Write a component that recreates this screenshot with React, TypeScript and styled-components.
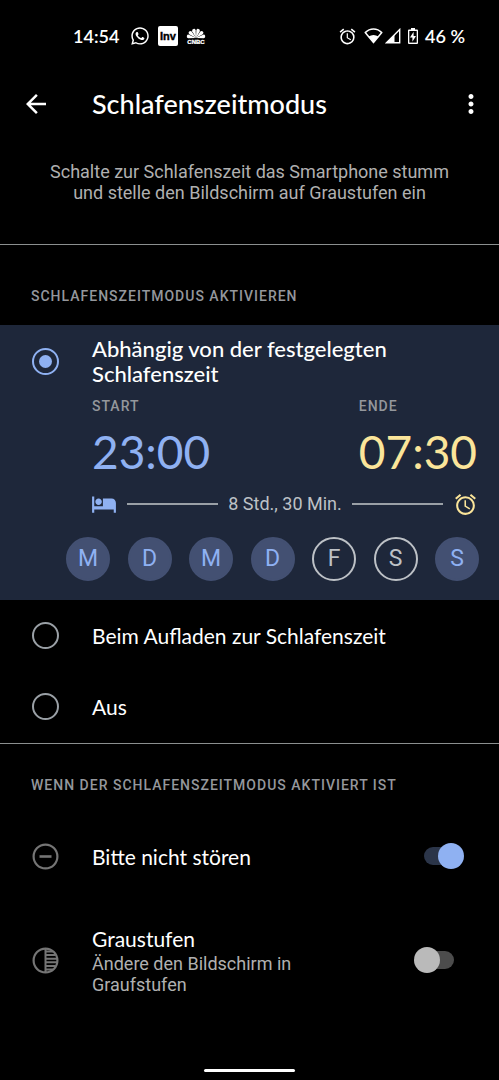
import React, { useState } from "react";
import styled, { createGlobalStyle } from "styled-components";
import { FaWhatsapp } from "react-icons/fa6";
import { MdAlarm, MdArrowBack, MdHotel, MdMoreVert } from "react-icons/md";

const color = {
  background: "#000",
  panel: "#1e273a",
  white: "#fff",
  muted: "#b0b0b0",
  label: "#94979c",
  blue: "#8fb1f2",
  yellow: "#fbe59a",
  chip: "#435072",
  grey: "#bdc1c6",
  ring: "#9aa0a6",
  icon: "#757575",
  divider: "#8b8f8f",
};

const display = `Lato, "Open Sans", sans-serif`;
const body = `Roboto, "Liberation Sans", sans-serif`;

const GlobalStyle = createGlobalStyle`
  *, *::before, *::after { box-sizing: border-box; }
  body { margin: 0; background: ${color.background}; color: ${color.white}; font-family: ${body}; }
  button, input { margin: 0; padding: 0; border: 0; background: none; color: inherit; font: inherit; cursor: pointer; }
  h1, h2, p { margin: 0; }
  svg { display: block; flex: none; }
`;

const Screen = styled.div`
  display: flex;
  flex-direction: column;
  min-height: 100vh;
`;

const StatusBar = styled.div`
  display: flex;
  align-items: center;
  justify-content: space-between;
  height: 72px;
  padding: 0 34px 0 73px;
  font: 600 18px/24px ${display};
`;

const StatusGroup = styled.div<{ $gap: number }>`
  display: flex;
  align-items: center;
  gap: ${(p) => p.$gap}px;
`;

const AppBar = styled.header`
  display: flex;
  align-items: center;
  height: 64px;
  padding: 0 13px 0 21px;
`;

const IconButton = styled.button`
  display: flex;
`;

const Title = styled.h1`
  flex: 1;
  margin-left: 41px;
  font: 500 27px/32px ${display};
`;

const Intro = styled.p`
  padding: 25px 40px 41px;
  border-bottom: 1px solid ${color.divider};
  color: ${color.muted};
  font-size: 18px;
  line-height: 21px;
  text-align: center;
`;

const SectionLabel = styled.h2<{ $top: number; $bottom: number }>`
  padding: ${(p) => p.$top}px 31px ${(p) => p.$bottom}px;
  color: ${color.label};
  font-size: 14px;
  font-weight: 500;
  line-height: 20px;
  letter-spacing: 1px;
  text-transform: uppercase;
`;

const Radio = styled.input`
  display: grid;
  flex: none;
  place-items: center;
  width: 27px;
  height: 27px;
  border: 2px solid ${color.ring};
  border-radius: 50%;
  appearance: none;

  &:checked { border-color: ${color.blue}; }
  &:checked::before {
    width: 13px;
    height: 13px;
    border-radius: 50%;
    background: ${color.blue};
    content: "";
  }
`;

const Option = styled.label<{ $height: number; $strong?: boolean }>`
  display: flex;
  align-items: center;
  gap: 33px;
  min-height: ${(p) => p.$height}px;
  padding: 0 80px 0 32px;
  font: ${(p) => (p.$strong ? "500 22px" : "400 21px")}/25px ${display};
  cursor: pointer;
`;

const SchedulePanel = styled.section`
  padding: 11px 0 19px;
  background: ${color.panel};
`;

const Schedule = styled.div`
  padding: 0 22px 0 92px;
`;

const Times = styled.div`
  display: flex;
  justify-content: space-between;
`;

const TimeButton = styled.button<{ $color: string }>`
  display: flex;
  flex-direction: column;
  gap: 8px;
  margin-top: 10px;
  color: ${(p) => p.$color};
  font: 400 46px/56px ${display};
  text-align: left;
`;

const TimeLabel = styled.span`
  color: ${color.label};
  font: 500 14px/20px ${body};
  letter-spacing: 1px;
  text-transform: uppercase;
`;

const Duration = styled.div`
  display: flex;
  align-items: center;
  gap: 10px;
  margin: 11px -1px 0;
  color: ${color.grey};
  font-size: 18px;
  line-height: 24px;
`;

const Rule = styled.span`
  flex: 1;
  height: 2px;
  background: ${color.ring};
`;

const Days = styled.div`
  display: flex;
  justify-content: space-between;
  padding: 20px 20px 0 66px;
`;

const Day = styled.button`
  width: 44px;
  height: 44px;
  border: 2px solid ${color.grey};
  border-radius: 50%;
  color: ${color.grey};
  font-size: 23px;
  line-height: 40px;
  text-align: center;

  &[aria-pressed="true"] {
    border-color: ${color.chip};
    background: ${color.chip};
    color: ${color.blue};
  }
`;

const Divider = styled.hr`
  width: 100%;
  height: 1px;
  margin: 1px 0 0;
  border: 0;
  background: ${color.divider};
`;

const Setting = styled.label<{ $height: number }>`
  display: flex;
  align-items: center;
  min-height: ${(p) => p.$height}px;
  padding: 0 35px 0 32px;
  cursor: pointer;
`;

const SettingText = styled.span`
  flex: 1;
  padding: 0 100px 0 33px;
`;

const SettingName = styled.span`
  display: block;
  font: 400 21px/25px ${display};
`;

const SettingHint = styled.span`
  display: block;
  margin-top: 2px;
  color: ${color.muted};
  font-size: 18px;
  line-height: 21px;
`;

const Switch = styled.input`
  display: flex;
  flex: none;
  align-items: center;
  width: 50px;
  height: 26px;
  appearance: none;

  &::before {
    width: 26px;
    height: 26px;
    border-radius: 50%;
    background: #bababa;
    content: "";
    z-index: 1;
  }
  &::after {
    width: 28px;
    height: 18px;
    margin-left: -14px;
    border-radius: 9px;
    background: #4c4c4c;
    content: "";
  }
  &:checked { flex-direction: row-reverse; }
  &:checked::before { background: ${color.blue}; }
  &:checked::after { margin: 0 -14px 0 0; background: #2b3549; }
`;

const HomeBar = styled.div`
  width: 91px;
  height: 3px;
  margin: auto auto 8px;
  border-radius: 2px;
  background: ${color.white};
`;

const InvBadge = () => (
  <svg width="20" height="20" viewBox="0 0 20 20">
    <rect width="20" height="20" rx="2" fill="#fff" />
    <text x="10" y="14" textAnchor="middle" fontFamily="Liberation Sans, sans-serif" fontSize="11" fontWeight="700" fill="#000" stroke="#000" strokeWidth="0.400">Inv</text>
  </svg>
);

const feathers = [-78, -47, -16, 16, 47, 78];

const Peacock = () => (
  <svg width="20" height="16" viewBox="0 0 20 16">
    {feathers.map((angle) => (
      <path key={angle} d="M10 10L8.200 2.400A1.800 1.800 0 0 1 11.800 2.400Z" fill="#fff" transform={`rotate(${angle} 10 10)`} />
    ))}
    <text x="10" y="15.500" textAnchor="middle" fontFamily="Liberation Sans, sans-serif" fontSize="6" fontWeight="700" fill="#fff" stroke="#fff" strokeWidth="0.300">CNBC</text>
  </svg>
);

const Wifi = () => (
  <svg width="19" height="16" viewBox="0 0 19 16">
    <path d="M1.200 4.600C6-.2 13-.2 17.800 4.600L9.500 14.600Z" fill="none" stroke="#fff" strokeWidth="1.500" strokeLinejoin="round" />
    <path d="M4.500 8.500Q9.500 5.500 14.500 8.500L9.500 14.600Z" fill="#fff" />
  </svg>
);

const Signal = () => (
  <svg width="16" height="16" viewBox="0 0 16 16">
    <path d="M1.500 14.800L14.700 1.500V14.800Z" fill="none" stroke="#fff" strokeWidth="1.400" />
    <path d="M1 15L9.500 6.500V15Z" fill="#fff" />
  </svg>
);

const Battery = () => (
  <svg width="10" height="16" viewBox="0 0 10 16">
    <path d="M3 0H7V1.500H9A1 1 0 0 1 10 2.500V15A1 1 0 0 1 9 16H1A1 1 0 0 1 0 15V2.500A1 1 0 0 1 1 1.500H3Z" fill="#fff" />
    <rect x="1.300" y="3" width="7.400" height="11.600" fill="#000" />
    <path d="M5.600 3.800L2 9.500H4.400V13.700L8 8H5.600Z" fill="#fff" />
  </svg>
);

const DoNotDisturb = () => (
  <svg width="27" height="27" viewBox="0 0 27 27" fill="none" stroke={color.icon} strokeWidth="2.200">
    <circle cx="13.500" cy="13.500" r="11.900" />
    <path d="M7.500 13.500H19.500" strokeWidth="2.600" />
  </svg>
);

const Grayscale = () => (
  <svg width="27" height="27" viewBox="0 0 27 27" fill="none" stroke={color.icon} strokeWidth="2.200">
    <circle cx="13.500" cy="13.500" r="11.900" />
    <path d="M13.500 1.500V25.500M13.500 4.500H21M13.500 8.100H23.500M13.500 11.700H25M13.500 15.300H25M13.500 18.900H23.500M13.500 22.500H21" strokeWidth="2" />
  </svg>
);

const week = [
  { name: "Montag", on: true },
  { name: "Dienstag", on: true },
  { name: "Mittwoch", on: true },
  { name: "Donnerstag", on: true },
  { name: "Freitag", on: false },
  { name: "Samstag", on: false },
  { name: "Sonntag", on: true },
];

export default function App() {
  const [mode, setMode] = useState("schedule");
  const [days, setDays] = useState(week.map((d) => d.on));

  const toggleDay = (index: number) =>
    setDays(days.map((on, i) => (i === index ? !on : on)));

  return (
    <Screen>
      <GlobalStyle />
      <StatusBar>
        <StatusGroup $gap={11}>
          <span>14:54</span>
          <StatusGroup $gap={8}>
            <FaWhatsapp size={20} />
            <InvBadge />
            <Peacock />
          </StatusGroup>
        </StatusGroup>
        <StatusGroup $gap={7}>
          <MdAlarm size={19} />
          <StatusGroup $gap={2}>
            <Wifi />
            <Signal />
          </StatusGroup>
          <Battery />
          <span>46 %</span>
        </StatusGroup>
      </StatusBar>

      <AppBar>
        <IconButton aria-label="Zurück">
          <MdArrowBack size={30} />
        </IconButton>
        <Title>Schlafenszeitmodus</Title>
        <IconButton aria-label="Weitere Optionen">
          <MdMoreVert size={30} />
        </IconButton>
      </AppBar>

      <Intro>Schalte zur Schlafenszeit das Smartphone stumm und stelle den Bildschirm auf Graustufen ein</Intro>

      <SectionLabel $top={41} $bottom={19}>Schlafenszeitmodus aktivieren</SectionLabel>

      <SchedulePanel>
        <Option $height={50} $strong>
          <Radio type="radio" name="mode" checked={mode === "schedule"} onChange={() => setMode("schedule")} />
          Abhängig von der festgelegten Schlafenszeit
        </Option>
        <Schedule>
          <Times>
            <TimeButton $color={color.blue}>
              <TimeLabel>Start</TimeLabel>
              23:00
            </TimeButton>
            <TimeButton $color={color.yellow}>
              <TimeLabel>Ende</TimeLabel>
              07:30
            </TimeButton>
          </Times>
          <Duration>
            <MdHotel size={26} color={color.blue} />
            <Rule />
            8 Std., 30 Min.
            <Rule />
            <MdAlarm size={25} color={color.yellow} />
          </Duration>
        </Schedule>
        <Days>
          {week.map((day, i) => (
            <Day key={day.name} aria-label={day.name} aria-pressed={days[i]} onClick={() => toggleDay(i)}>
              {day.name[0]}
            </Day>
          ))}
        </Days>
      </SchedulePanel>

      <Option $height={71}>
        <Radio type="radio" name="mode" checked={mode === "charging"} onChange={() => setMode("charging")} />
        Beim Aufladen zur Schlafenszeit
      </Option>
      <Option $height={71}>
        <Radio type="radio" name="mode" checked={mode === "off"} onChange={() => setMode("off")} />
        Aus
      </Option>
      <Divider />

      <SectionLabel $top={31} $bottom={9}>Wenn der Schlafenszeitmodus aktiviert ist</SectionLabel>

      <Setting $height={104}>
        <DoNotDisturb />
        <SettingText>
          <SettingName>Bitte nicht stören</SettingName>
        </SettingText>
        <Switch type="checkbox" role="switch" defaultChecked />
      </Setting>
      <Setting $height={104}>
        <Grayscale />
        <SettingText>
          <SettingName>Graustufen</SettingName>
          <SettingHint>Ändere den Bildschirm in Graufstufen</SettingHint>
        </SettingText>
        <Switch type="checkbox" role="switch" />
      </Setting>

      <HomeBar />
    </Screen>
  );
}
